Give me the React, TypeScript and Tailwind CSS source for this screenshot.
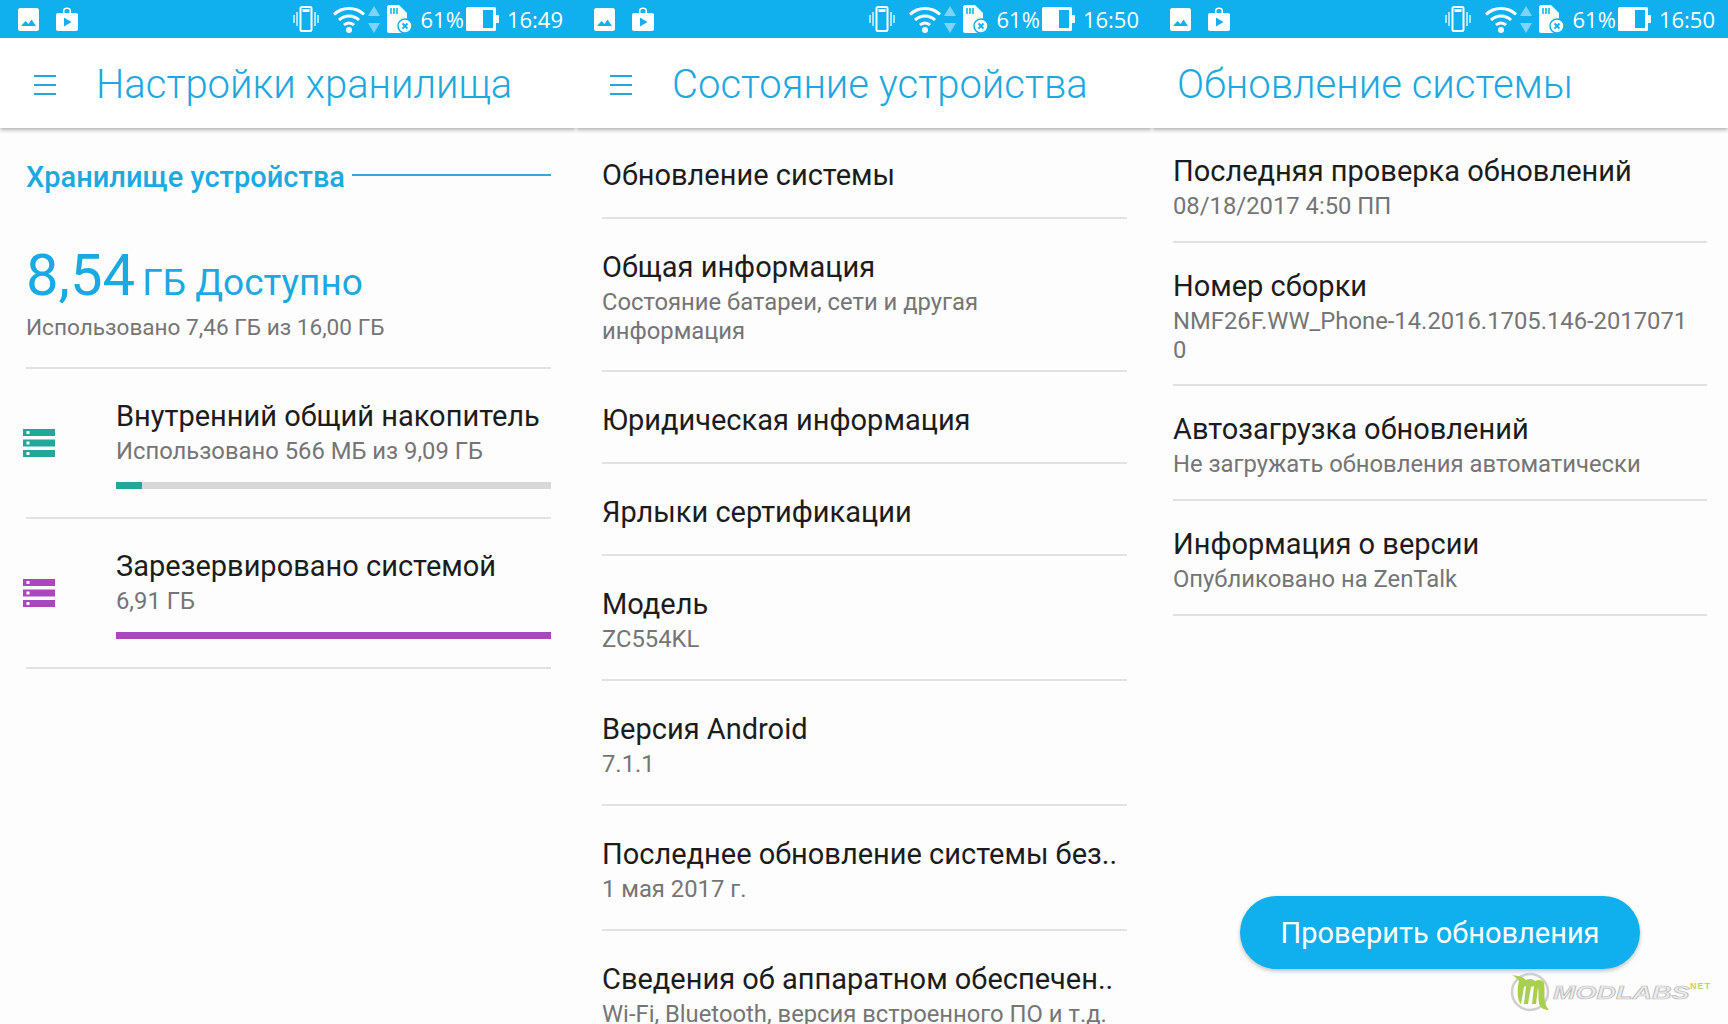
import React from 'react';

const roboto = 'font-["Roboto","Liberation_Sans",sans-serif]';

function StatusBar({ time }: { time: string }) {
  return (
    <div className="flex h-[38px] shrink-0 items-center bg-[#0fb0ed] pl-[18px] pr-[13px] text-white">
      <svg width="21" height="23" viewBox="0 0 21 23" className="mr-[17px]">
        <rect width="21" height="23" rx="2.5" fill="#fff" />
        <path d="M3 18l4.5-5 3 3 3-4.5 4.5 6.5z" fill="#0fb0ed" />
      </svg>
      <svg width="22" height="24" viewBox="0 0 22 24">
        <path d="M2 6h5V3.500C7 1.500 8.500 .5 11 .5s4 1 4 3V6h5c1 0 2 .8 2 2v14c0 1-1 2-2 2H2c-1 0-2-1-2-2V8c0-1.200 1-2 2-2zm6.500-2.500V6h5V3.500c0-1-1-1.500-2.500-1.500s-2.500 .5-2.500 1.500z" fill="#fff" fillRule="evenodd" />
        <path d="M8 10.500l7.500 4.500L8 19.500z" fill="#0fb0ed" />
      </svg>
      <div className="flex-1" />
      <svg width="26" height="26" viewBox="0 0 26 26" className="mr-[14px]">
        <rect x="7.500" y="1" width="11" height="24" rx="1.500" fill="none" stroke="#fff" strokeWidth="2" />
        <rect x="9.500" y="3" width="7" height="3" fill="#fff" />
        <path d="M4 6v14M1 9v8M22 6v14M25 9v8" stroke="#fff" strokeWidth="1.500" opacity=".85" />
      </svg>
      <svg width="32" height="27" viewBox="0 0 32 27" className="mr-[3px]">
        <path d="M1 8.500C9 .5 23 .5 31 8.500M6 14c5.500-5.500 14.500-5.500 20 0M11 19c2.800-2.800 7.200-2.800 10 0" fill="none" stroke="#fff" strokeWidth="3" />
        <circle cx="16" cy="24" r="3" fill="#fff" />
      </svg>
      <svg width="12" height="27" viewBox="0 0 12 27" className="mr-[7px]">
        <path d="M6 0l6 10H0z" fill="#7fd3f5" />
        <path d="M6 27l6-10H0z" fill="#7fd3f5" />
      </svg>
      <svg width="25" height="28" viewBox="0 0 25 28" className="mr-[9px]">
        <path d="M2 0h10l8 8v20H2c-1 0-2-1-2-2V2C0 1 1 0 2 0z" fill="#fff" />
        <path d="M4 3v6M7 3v6M10 3v6" stroke="#0fb0ed" strokeWidth="1.500" />
        <circle cx="18" cy="21" r="7" fill="#fff" stroke="#0fb0ed" strokeWidth="1.500" />
        <path d="M15.500 18.500l5 5M20.500 18.500l-5 5" stroke="#0fb0ed" strokeWidth="1.800" />
      </svg>
      <span className='font-["Open_Sans",sans-serif] text-[22px] font-medium leading-none'>61%</span>
      <svg width="33" height="24" viewBox="0 0 33 24" className="ml-[2px] mr-[8px]">
        <rect width="30" height="24" rx="1.500" fill="#fff" />
        <rect x="17" y="3" width="10" height="18" fill="#0fb0ed" />
        <rect x="30" y="8" width="3" height="8" fill="#fff" />
      </svg>
      <span className='font-["Open_Sans",sans-serif] text-[22px] font-medium leading-none'>{time}</span>
    </div>
  );
}

function AppBar({ title, menu = true }: { title: string; menu?: boolean }) {
  return (
    <div className="relative z-10 flex h-[90px] shrink-0 items-center bg-white pt-[3px] shadow-[0_2px_4px_rgba(0,0,0,0.3)] [clip-path:inset(0_0_-10px_0)]">
      {menu && (
        <div className="ml-[34px] mr-[40px] flex w-[22px] flex-col gap-[7px]">
          <div className="h-[2px] bg-[#1ea8df]" />
          <div className="h-[2px] bg-[#1ea8df]" />
          <div className="h-[2px] bg-[#1ea8df]" />
        </div>
      )}
      <h1 className={`${roboto} text-[40px] font-light leading-none text-[#1ea8df] ${menu ? '' : 'ml-[25px]'}`}>{title}</h1>
    </div>
  );
}

function StorageIcon({ color }: { color: string }) {
  return (
    <svg width="32" height="28" viewBox="0 0 32 28" className="shrink-0">
      {[0, 10.500, 21].map((y) => (
        <g key={y}>
          <rect y={y} width="32" height="7" fill={color} />
          <rect x="3.500" y={y + 2} width="3" height="3" fill="#fff" />
        </g>
      ))}
    </svg>
  );
}

function StorageRow({ title, sub, color, pct }: { title: string; sub: string; color: string; pct: string }) {
  return (
    <div className="flex h-[150px] items-center border-t-2 border-[#e2e2e2]">
      <div className="-ml-[3px] mr-[61px] flex">
        <StorageIcon color={color} />
      </div>
      <div className="flex-1 self-start pt-[30px]">
        <div className="text-[29px] leading-[34px] text-[#1c1c1c]">{title}</div>
        <div className="mt-[2px] text-[23.800px] leading-[32px] text-[#757575]">{sub}</div>
        <div className="mt-[15px] h-[7px] bg-[#d8d8d8]">
          <div className={`h-full ${pct}`} style={{ backgroundColor: color }} />
        </div>
      </div>
    </div>
  );
}

function StoragePanel() {
  return (
    <div className="flex-1 pl-[26px] pr-[25px] pt-[33px]">
      <div className="flex items-center">
        <span className="text-[29px] font-medium leading-[32px] text-[#1ba9e1]">Хранилище устройства</span>
        <div className="ml-[7px] h-[2px] flex-1 -translate-y-[2px] bg-[#3ba7cf]" />
      </div>
      <div className="mt-[48px] flex items-baseline text-[#1ba9e1]">
        <span className="text-[58px] leading-[68px]">8,54</span>
        <span className="ml-[7px] text-[37px] leading-[40px]">ГБ Доступно</span>
      </div>
      <div className="mt-[5px] pb-[25px] text-[22.600px] leading-[28px] text-[#757575]">Использовано 7,46 ГБ из 16,00 ГБ</div>
      <StorageRow title="Внутренний общий накопитель" sub="Использовано 566 МБ из 9,09 ГБ" color="#26a69a" pct="w-[6%]" />
      <StorageRow title="Зарезервировано системой" sub="6,91 ГБ" color="#ab47bc" pct="w-full" />
      <div className="h-[2px] bg-[#e2e2e2]" />
    </div>
  );
}

function InfoRow({ title, sub, h }: { title: string; sub?: string; h: string }) {
  return (
    <div className={`flex flex-col justify-center border-b-2 border-[#e2e2e2] pt-[5px] ${h}`}>
      <div className="whitespace-nowrap text-[29px] leading-[36px] text-[#1c1c1c]">{title}</div>
      {sub && <div className="mt-[3px] whitespace-pre-line text-[23.800px] leading-[29px] text-[#757575]">{sub}</div>}
    </div>
  );
}

const deviceRows = [
  { title: 'Обновление системы', h: 'h-[91px]' },
  { title: 'Общая информация', sub: 'Состояние батареи, сети и другая\nинформация', h: 'h-[153px]' },
  { title: 'Юридическая информация', h: 'h-[92px]' },
  { title: 'Ярлыки сертификации', h: 'h-[92px]' },
  { title: 'Модель', sub: 'ZC554KL', h: 'h-[125px]' },
  { title: 'Версия Android', sub: '7.1.1', h: 'h-[125px]' },
  { title: 'Последнее обновление системы без..', sub: '1 мая 2017 г.', h: 'h-[125px]' },
  { title: 'Сведения об аппаратном обеспечен..', sub: 'Wi-Fi, Bluetooth, версия встроенного ПО и т.д.', h: 'h-[125px] border-b-0' },
];

const updateRows = [
  { title: 'Последняя проверка обновлений', sub: '08/18/2017 4:50 ПП', h: 'h-[115px]' },
  { title: 'Номер сборки', sub: 'NMF26F.WW_Phone-14.2016.1705.146-2017071\n0', h: 'h-[143px]' },
  { title: 'Автозагрузка обновлений', sub: 'Не загружать обновления автоматически', h: 'h-[115px]' },
  { title: 'Информация о версии', sub: 'Опубликовано на ZenTalk', h: 'h-[115px]' },
];

function Watermark() {
  return (
    <div className="absolute left-[1510px] top-[972px] flex h-[42px] items-center">
      <svg width="42" height="42" viewBox="0 0 42 42" className="shrink-0">
        <circle cx="20" cy="20" r="18" fill="#fdfdfd" stroke="#cfcfcf" strokeWidth="2.500" />
        <path d="M2 3c7 1 11 2 14 5 4-2 7-1 9 1 4-2 8-1 9 2 1 6 0 13 1 18 .5 4 2 7 4 9-5 0-9-2-10-7-1-6 0-11-1-16l-2 17h-4l2-18-3 1-3 17h-4l2-18-2 1-3 17C7 29 7 16 9 9 7 6 5 5 2 3z" fill="#a9cf4e" />
      </svg>
      <span className='ml-[1px] inline-block w-[135px] origin-left scale-x-[1.5] font-["Liberation_Sans",sans-serif] text-[18px] font-bold italic leading-none text-[#ececec] [-webkit-text-stroke:0.7px_#bdbdbd]'>MODLABS</span>
      <span className='-mt-[14px] ml-[2px] font-["Liberation_Sans",sans-serif] text-[9px] font-bold leading-none tracking-[1px] text-[#b9d76b]'>NET</span>
    </div>
  );
}

export default function App() {
  return (
    <div className={`${roboto} relative flex h-[1024px] w-[1728px] overflow-hidden bg-[#fdfdfd]`}>
      <div className="flex w-[576px] flex-col">
        <StatusBar time="16:49" />
        <AppBar title="Настройки хранилища" />
        <StoragePanel />
      </div>
      <div className="flex w-[576px] flex-col">
        <StatusBar time="16:50" />
        <AppBar title="Состояние устройства" />
        <div className="pl-[26px] pr-[25px]">
          {deviceRows.map((row) => (
            <InfoRow key={row.title} {...row} />
          ))}
        </div>
      </div>
      <div className="flex w-[576px] flex-col">
        <StatusBar time="16:50" />
        <AppBar title="Обновление системы" menu={false} />
        <div className="pl-[21px] pr-[21px]">
          {updateRows.map((row) => (
            <InfoRow key={row.title} {...row} />
          ))}
        </div>
        <div className="mt-auto mb-[55px] flex justify-center">
          <button className="h-[73px] w-[400px] rounded-full bg-[#0fb0ed] pt-[2px] text-[29px] text-white shadow-[0_2px_4px_rgba(0,0,0,0.25)]">
            Проверить обновления
          </button>
        </div>
      </div>
      <Watermark />
    </div>
  );
}
